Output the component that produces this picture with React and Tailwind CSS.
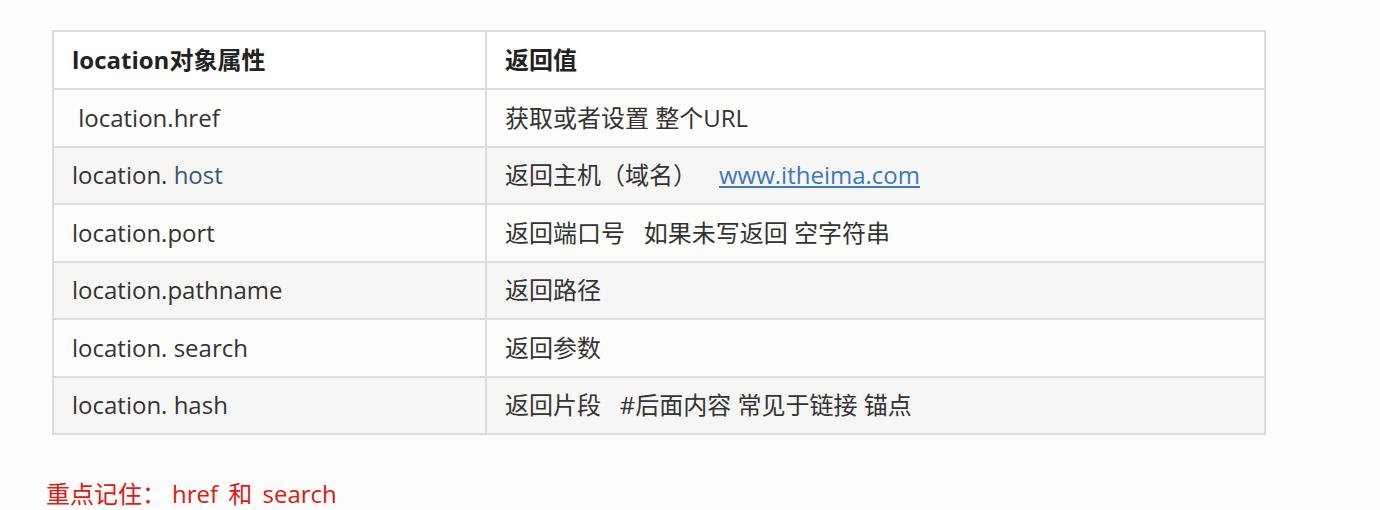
import React from 'react';

const rows = [
  { key: ' location.href', val: '获取或者设置 整个URL' },
  { key: 'location. ', keyExtra: 'host', val: '返回主机（域名）', link: 'www.itheima.com' },
  { key: 'location.port', val: '返回端口号   如果未写返回 空字符串' },
  { key: 'location.pathname', val: '返回路径' },
  { key: 'location. search', val: '返回参数' },
  { key: 'location. hash', val: '返回片段   #后面内容 常见于链接 锚点' },
];

const font = { fontFamily: '"Open Sans", "Noto Sans CJK SC", sans-serif' };

export default function App()
{
  return (
    <div className="w-[1380px] h-[510px] bg-[#fdfdfd] text-[#333] overflow-hidden" style={font}>
      <div className="pt-[30px] pl-[52px]">
        <table className="w-[1214px] border-collapse border-2 border-[#dcdcdc] text-[24px]">
          <thead>
            <tr className="h-[58px] bg-white">
              <th className="w-[433px] border-2 border-[#dcdcdc] pl-[18px] text-left font-bold text-[#222]">location对象属性</th>
              <th className="border-2 border-[#dcdcdc] pl-[18px] text-left font-bold text-[#222]">返回值</th>
            </tr>
          </thead>
          <tbody>
            {rows.map((r, i) => (
              <tr key={i} className={i % 2 === 1 ? 'h-[57.5px] bg-[#f6f6f5]' : 'h-[57.5px] bg-[#fdfdfc]'}>
                <td className="border-2 border-[#dcdcdc] pl-[18px] whitespace-pre">
                  {r.key}
                  {r.keyExtra && <span className="text-[#3f5570]">{r.keyExtra}</span>}
                </td>
                <td className="border-2 border-[#dcdcdc] pl-[18px] whitespace-pre">
                  {r.val}
                  {r.link && (
                    <a href="#" className="ml-[22px] text-[#3f77bd] underline underline-offset-2">{r.link}</a>
                  )}
                </td>
              </tr>
            ))}
          </tbody>
        </table>
      </div>
      <div className="mt-[45px] pl-[46px] text-[24px] leading-[28px] text-[#e8160c] whitespace-pre">
        重点记住：<span className="pl-[6px]">href</span><span className="px-[4px]"> 和 </span>search
      </div>
    </div>
  );
}
